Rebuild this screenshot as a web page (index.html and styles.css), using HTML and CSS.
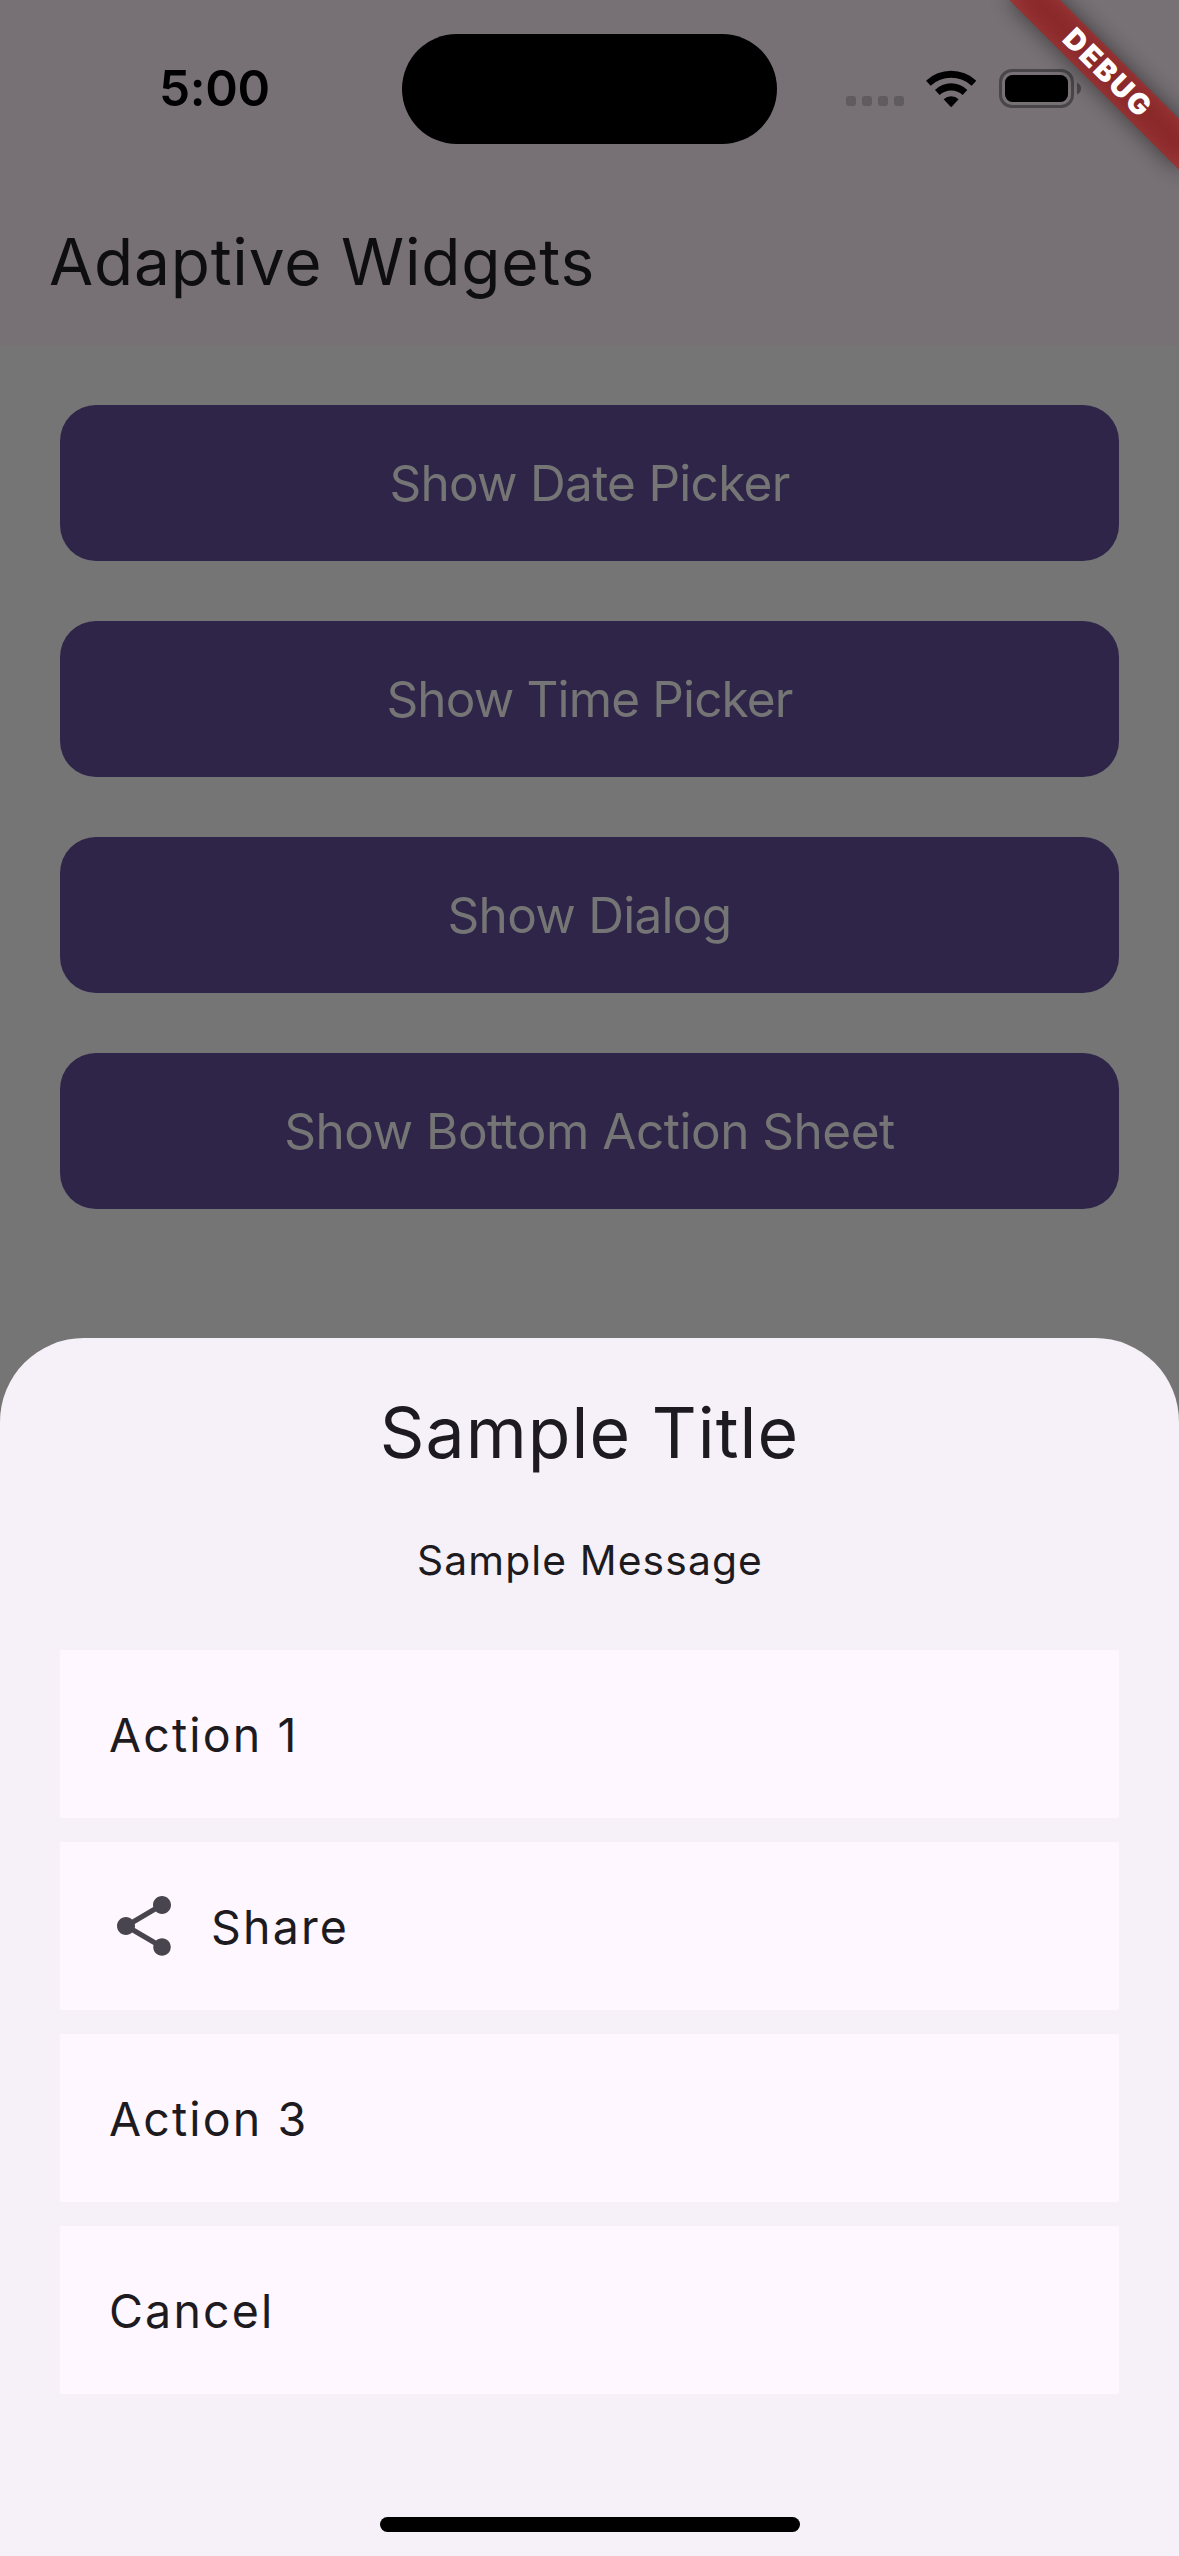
FILE: index.html
```html
<!DOCTYPE html>
<html lang="en">
<head>
  <meta charset="utf-8">
  <title>Adaptive Widgets</title>
  <link rel="stylesheet" href="styles.css">
</head>
<body>
  <div class="screen">
    <header class="header">
      <div class="status">
        <div class="status-time">5:00</div>
        <div class="island"></div>
        <div class="status-icons">
          <div class="signal"><i></i><i></i><i></i><i></i></div>
          <svg class="wifi" viewBox="0 0 151 112" aria-hidden="true">
            <path d="M0 32A111 111 0 0 1 151 32L137 47A92 92 0 0 0 14 47Z"/>
            <path d="M27 60A69 69 0 0 1 124 60L110 75A50 50 0 0 0 41 75Z"/>
            <path d="M53 88A33 33 0 0 1 98 88L75.500 112Z"/>
          </svg>
          <svg class="battery" viewBox="0 0 82 39" aria-hidden="true">
            <rect class="battery-shell" x="1.500" y="1.500" width="72" height="36" rx="11.500"/>
            <rect x="6" y="6" width="63" height="27" rx="7.500"/>
            <path class="battery-cap" d="M78 13.500Q82 15.500 82 19.500Q82 23.500 78 25.500Z"/>
          </svg>
        </div>
      </div>
      <h1 class="app-title">Adaptive Widgets</h1>
    </header>

    <main class="content">
      <button class="btn">Show Date Picker</button>
      <button class="btn btn-time">Show Time Picker</button>
      <button class="btn">Show Dialog</button>
      <button class="btn btn-sheet">Show Bottom Action Sheet</button>
    </main>

    <section class="sheet">
      <h2 class="sheet-title">Sample Title</h2>
      <p class="sheet-message">Sample Message</p>
      <ul class="actions">
        <li class="action"><span>Action 1</span></li>
        <li class="action action-icon">
          <svg class="share" viewBox="0 0 24 24" aria-hidden="true">
            <path d="M18 16.080c-.76 0-1.440.3-1.960.77L8.910 12.700c.05-.23.09-.46.09-.7s-.04-.47-.09-.7l7.050-4.110c.54.5 1.250.81 2.040.81 1.660 0 3-1.340 3-3s-1.340-3-3-3-3 1.340-3 3c0 .24.04.47.09.7L8.040 9.810C7.500 9.310 6.790 9 6 9c-1.660 0-3 1.340-3 3s1.340 3 3 3c.79 0 1.500-.31 2.040-.81l7.120 4.160c-.05.21-.08.43-.08.65 0 1.610 1.310 2.920 2.920 2.920s2.920-1.310 2.920-2.920-1.310-2.920-2.920-2.920z"/>
          </svg>
          <span>Share</span>
        </li>
        <li class="action"><span>Action 3</span></li>
        <li class="action"><span>Cancel</span></li>
      </ul>
      <div class="home-bar"></div>
    </section>

    <div class="ribbon-corner">
      <div class="ribbon"><span>DEBUG</span></div>
    </div>
  </div>
</body>
</html>
```
FILE: styles.css
```css
* {
  box-sizing: border-box;
}

body {
  margin: 0;
  font-family: Inter, "Liberation Sans", sans-serif;
}

h1, h2, p, ul {
  margin: 0;
  padding: 0;
  font-weight: 400;
}

.screen {
  position: relative;
  display: flex;
  flex-direction: column;
  width: 1179px;
  height: 2556px;
  overflow: hidden;
  background: #757575;
}

/* Status bar and app bar */

.header {
  height: 345px;
  background: #777175;
}

.status {
  display: grid;
  grid-template-columns: 402px 375px 1fr;
  align-items: center;
  height: 177px;
}

.status-time {
  padding: 0 0 2px 159px;
  font-size: 49.5px;
  font-weight: 600;
  letter-spacing: -0.32px;
}

.island {
  height: 110px;
  margin-top: 1px;
  border-radius: 55px;
  background: #000;
}

.status-icons {
  display: flex;
  align-items: center;
  padding-left: 69px;
}

.signal {
  display: flex;
  gap: 6px;
  margin-right: 22px;
  padding-top: 25px;
}

.signal i {
  width: 10px;
  height: 10px;
  border-radius: 3px;
  background: #605b5f;
}

.wifi {
  width: 50.3px;
  height: 37.3px;
  margin-right: 22.7px;
}

.battery {
  width: 82px;
  height: 39px;
}

.battery-shell {
  fill: none;
  stroke: #494649;
  stroke-width: 3px;
}

.battery-cap {
  fill: #494649;
}

.app-title {
  padding: 1px 0 0 49px;
  font-size: 64px;
  line-height: 168px;
  letter-spacing: 0.79px;
  color: #0e0e10;
}

/* Dimmed page behind the sheet */

.content {
  display: flex;
  flex-direction: column;
  gap: 60px;
  height: 993px;
  padding: 60px 60px 0;
}

.btn {
  height: 156px;
  padding: 0;
  border: 0;
  border-radius: 36px;
  background: #2f2549;
  color: #757575;
  font-family: inherit;
  font-size: 49.5px;
  letter-spacing: -0.72px;
}

.btn-time {
  letter-spacing: -0.85px;
}

.btn-sheet {
  letter-spacing: -0.49px;
}

/* Bottom action sheet */

.sheet {
  display: flex;
  flex-direction: column;
  flex: 1;
  padding: 47px 60px 24px;
  border-radius: 84px 84px 0 0;
  background: #f6f1f8;
  color: #1d1b20;
}

.sheet-title {
  font-size: 69.7px;
  line-height: 96px;
  letter-spacing: 1.05px;
  text-align: center;
}

.sheet-message {
  margin-top: 43px;
  padding-left: 1px;
  font-size: 40.8px;
  line-height: 72px;
  letter-spacing: 1.11px;
  text-align: center;
}

.actions {
  display: flex;
  flex-direction: column;
  gap: 24px;
  margin-top: 54px;
  list-style: none;
}

.action {
  display: flex;
  align-items: center;
  gap: 31px;
  height: 168px;
  padding: 0 49px;
  background: #fef7ff;
}

.action-icon {
  padding: 0 48px;
}

.action span {
  padding-top: 2px;
  font-size: 46.5px;
  letter-spacing: 2.15px;
}

.share {
  width: 72px;
  height: 72px;
  fill: #49454f;
}

.home-bar {
  width: 420px;
  height: 15px;
  margin: auto auto 0;
  border-radius: 8px;
  background: #000;
}

/* Debug banner across the top right corner */

.ribbon-corner {
  position: absolute;
  top: 0;
  right: 0;
  width: 0;
  height: 0;
  transform: rotate(45deg);
}

.ribbon {
  position: absolute;
  top: 84px;
  left: -120px;
  display: flex;
  align-items: center;
  justify-content: center;
  width: 240px;
  height: 36px;
  padding-left: 3px;
  color: #fff;
  font-size: 29px;
  font-weight: 900;
  line-height: 36px;
  letter-spacing: 2.3px;
}

.ribbon::before,
.ribbon::after {
  content: "";
  position: absolute;
  inset: 0;
}

.ribbon::before {
  background: rgba(0, 0, 0, 0.5);
  filter: blur(11.9px);
}

.ribbon::after {
  background: rgba(183, 28, 28, 0.627);
}

.ribbon span {
  position: relative;
  z-index: 1;
}
```
